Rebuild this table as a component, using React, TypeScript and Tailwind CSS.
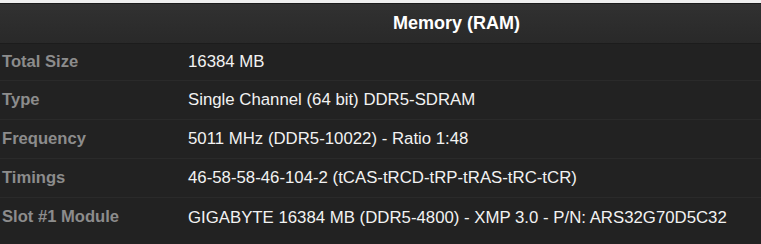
import React from "react";

const rows: [string, string][] = [
  ["Total Size", "16384 MB"],
  ["Type", "Single Channel (64 bit) DDR5-SDRAM"],
  ["Frequency", "5011 MHz (DDR5-10022) - Ratio 1:48"],
  ["Timings", "46-58-58-46-104-2 (tCAS-tRCD-tRP-tRAS-tRC-tCR)"],
  ["Slot #1 Module", "GIGABYTE 16384 MB (DDR5-4800) - XMP 3.0 - P/N: ARS32G70D5C32"],
];

export default function App() {
  return (
    <div
      className="w-[761px] h-[244px] overflow-hidden bg-[#222222] flex flex-col"
      style={{ fontFamily: '"Liberation Sans", Arial, sans-serif' }}
    >
      <div className="h-[3px] bg-[#eeeeee] shrink-0" />
      <div className="h-[41px] shrink-0 grid grid-cols-[170px_1fr] border-t border-t-[#1b1b1b] border-b border-b-[#1c1c1c] bg-gradient-to-b from-[#313131] to-[#292929]">
        <div />
        <div className="flex items-center justify-center pr-[18px] text-[18px] font-bold text-white">
          Memory (RAM)
        </div>
      </div>
      {rows.map(([label, value], i) => (
        <div
          key={label}
          className={`grid grid-cols-[170px_1fr] shrink-0 ${i === 0 ? "h-[37px]" : "h-[39px]"} ${
            i < rows.length - 1 ? "border-b border-b-[#2a2a2a]" : ""
          }`}
        >
          <div className="flex items-center pl-[2px] text-[16.6px] font-bold text-[#8c8c8c] whitespace-nowrap">
            {label}
          </div>
          <div className="flex items-center pl-[18px] text-[16.8px] text-[#f2f2f2] whitespace-nowrap">
            {value}
          </div>
        </div>
      ))}
    </div>
  );
}
